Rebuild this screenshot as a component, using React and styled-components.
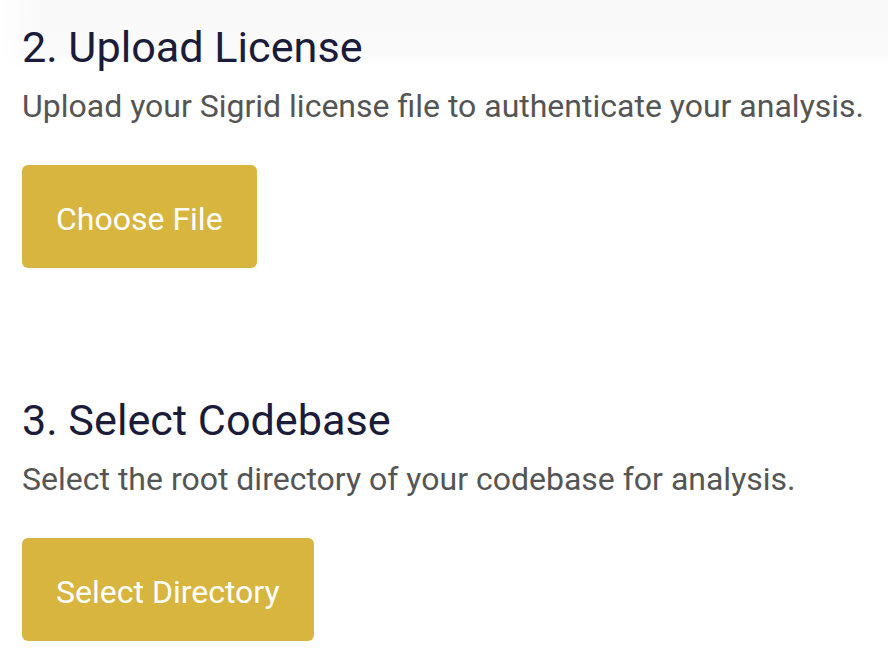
import React from "react";
import styled, { createGlobalStyle } from "styled-components";

const GlobalStyle = createGlobalStyle`
    html, body {
        margin: 0;
        padding: 0;
        background: #ffffff;
    }
    body {
        font-family: Roboto, "Liberation Sans", sans-serif;
    }
`;

const Page = styled.main`
    min-height: 668px;
    box-sizing: border-box;
    padding: 21.6px 22px 0;
    display: flex;
    flex-direction: column;
    gap: 126.3px;
    background:
        linear-gradient(to right, #ffffff 0, rgba(255, 255, 255, 0) 40px) 0 0 / 100% 70px no-repeat,
        linear-gradient(to bottom, #f9f9fa 0, #fafafb 54px, #ffffff 68px) 0 0 / 100% 70px no-repeat,
        #ffffff;
`;

const Section = styled.section`
    display: flex;
    flex-direction: column;
    align-items: flex-start;
`;

const Title = styled.h2`
    margin: 0;
    font-size: 43.2px;
    line-height: 51.2px;
    font-weight: 400;
    color: #1b1b3a;
`;

const Description = styled.p`
    margin: 9px 0 35px;
    font-size: 32px;
    line-height: 48px;
    color: #555555;
`;

const ActionButton = styled.button`
    font-family: Roboto, "Liberation Sans", sans-serif;
    font-size: 32px;
    line-height: 37.5px;
    font-weight: 400;
    color: #ffffff;
    background-color: #d8b53f;
    border: none;
    border-radius: 6px;
    padding: 36px 34px 30px;
    cursor: pointer;
`;

const steps = [
    {
        title: "2. Upload License",
        text: "Upload your Sigrid license file to authenticate your analysis.",
        action: "Choose File",
    },
    {
        title: "3. Select Codebase",
        text: "Select the root directory of your codebase for analysis.",
        action: "Select Directory",
    },
];

function App() {
    return (
        <>
            <GlobalStyle />
            <Page>
                {steps.map((step) => (
                    <Section key={step.title}>
                        <Title>{step.title}</Title>
                        <Description>{step.text}</Description>
                        <ActionButton type="button">{step.action}</ActionButton>
                    </Section>
                ))}
            </Page>
        </>
    );
}

export default App;
